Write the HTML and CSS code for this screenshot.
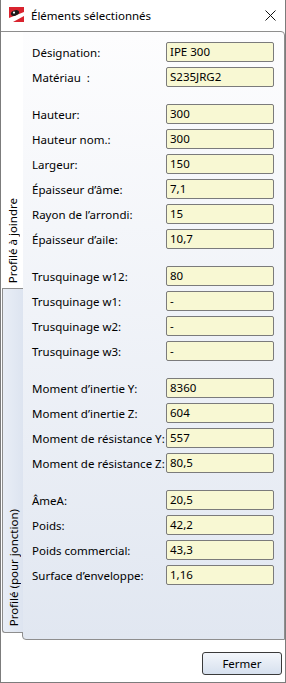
FILE: index.html
```html
<!DOCTYPE html>
<html lang="fr">
<head>
    <meta charset="UTF-8">
    <meta name="viewport" content="width=device-width, initial-scale=1.0">
    <title>Éléments sélectionnés</title>
    <link rel="stylesheet" href="styles.css">
</head>
<body>
    <div class="window">
        <div class="titlebar">
            <svg class="app-icon" width="15" height="15" viewBox="0 0 15 15">
                <rect x="0" y="0" width="15" height="15" fill="#d9232e"/>
                <polygon points="0,15 0,11 15,5 15,9 4,15" fill="#ffffff"/>
                <ellipse cx="6" cy="6" rx="4.2" ry="2.6" fill="#1a1a1a" transform="rotate(-20 6 6)"/>
                <circle cx="5" cy="5.6" r="1.1" fill="#ffffff"/>
            </svg>
            <span class="title">Éléments sélectionnés</span>
            <svg class="close" width="11" height="11" viewBox="0 0 11 11">
                <path d="M0.5 0.5 L10.5 10.5 M10.5 0.5 L0.5 10.5" stroke="#111" stroke-width="1"/>
            </svg>
        </div>

        <div class="main">
            <div class="tabs">
                <div class="tab active"><span>Profilé à joindre</span></div>
                <div class="tab"><span>Profilé (pour jonction)</span></div>
            </div>

            <div class="panel">
                <div class="group">
                    <label>Désignation:</label><div class="field">IPE 300</div>
                    <label>Matériau&nbsp; :</label><div class="field">S235JRG2</div>
                </div>
                <div class="group">
                    <label>Hauteur:</label><div class="field">300</div>
                    <label>Hauteur nom.:</label><div class="field">300</div>
                    <label>Largeur:</label><div class="field">150</div>
                    <label>Épaisseur d’âme:</label><div class="field">7,1</div>
                    <label>Rayon de l’arrondi:</label><div class="field">15</div>
                    <label>Épaisseur d’aile:</label><div class="field">10,7</div>
                </div>
                <div class="group">
                    <label>Trusquinage w12:</label><div class="field">80</div>
                    <label>Trusquinage w1:</label><div class="field">-</div>
                    <label>Trusquinage w2:</label><div class="field">-</div>
                    <label>Trusquinage w3:</label><div class="field">-</div>
                </div>
                <div class="group">
                    <label>Moment d’inertie Y:</label><div class="field">8360</div>
                    <label>Moment d’inertie Z:</label><div class="field">604</div>
                    <label>Moment de résistance Y:</label><div class="field">557</div>
                    <label>Moment de résistance Z:</label><div class="field">80,5</div>
                </div>
                <div class="group">
                    <label>ÂmeA:</label><div class="field">20,5</div>
                    <label>Poids:</label><div class="field">42,2</div>
                    <label>Poids commercial:</label><div class="field">43,3</div>
                    <label>Surface d’enveloppe:</label><div class="field">1,16</div>
                </div>
            </div>
        </div>

        <div class="footer">
            <button class="btn">Fermer</button>
        </div>
    </div>
</body>
</html>
```

FILE: styles.css
```css
* {
    margin: 0;
    padding: 0;
    box-sizing: border-box;
    font-family: 'Segoe UI', 'Noto Sans', sans-serif;
}

body {
    background: #ffffff;
}

.window {
    width: 286px;
    height: 683px;
    background: #ffffff;
    border: 1px solid #7c7c7c;
    border-top: none;
    display: flex;
    flex-direction: column;
}

.titlebar {
    height: 31px;
    display: flex;
    align-items: center;
    padding-left: 8px;
    padding-right: 9px;
}

.titlebar .app-icon {
    margin-top: -2px;
}

.titlebar .title {
    flex: 1;
    margin-left: 7px;
    margin-top: -1px;
    font-size: 11.5px;
    color: #000000;
}

.titlebar .close {
    margin-top: -1px;
}

.main {
    display: flex;
    height: 609px;
}

.tabs {
    width: 22px;
    margin-right: -1px;
    position: relative;
    z-index: 1;
    display: flex;
    flex-direction: column;
}

.tab {
    display: flex;
    justify-content: center;
    align-items: flex-end;
    padding-bottom: 6px;
    font-size: 11.5px;
    color: #000000;
}

.tab span {
    writing-mode: vertical-rl;
    transform: rotate(180deg);
    white-space: nowrap;
}

.tab.active {
    height: 258px;
    background: #ffffff;
    border-top: 1px solid #8e8e8e;
}

.tab:not(.active) {
    height: 345px;
    width: 21px;
    margin-left: 1px;
    margin-top: -1px;
    border: 1px solid #8e8e8e;
    border-right: none;
    border-radius: 0 0 0 3px;
    background: linear-gradient(to right, #e9eef6, #dde4f0);
}

.panel {
    width: 263px;
    height: 609px;
    border: 1px solid #8e8e8e;
    border-radius: 0 4px 0 4px;
    background: linear-gradient(to bottom, #fdfdfe, #e1e7f1);
    padding: 10px 9px 0 9px;
}

.group {
    display: grid;
    grid-template-columns: 134px 108px;
    grid-auto-rows: 20px;
    row-gap: 5px;
    margin-bottom: 17px;
}

.group label {
    display: flex;
    align-items: center;
    height: 20px;
    font-size: 11.5px;
    color: #000000;
    white-space: nowrap;
}

.group .field {
    height: 20px;
    border: 1px solid #7b7b7b;
    border-radius: 2px;
    background: #f8f8d3;
    font-size: 11.5px;
    line-height: 18px;
    padding-left: 3px;
    color: #000000;
}

.footer {
    flex: 1;
    display: flex;
    justify-content: flex-end;
    padding-top: 12px;
    padding-right: 3px;
}

.btn {
    width: 80px;
    height: 23px;
    border: 1px solid #3a3a3a;
    border-radius: 3px;
    background: linear-gradient(to bottom, #f3f6fb, #d6e0ee);
    font-size: 11.5px;
    color: #000000;
}
```
